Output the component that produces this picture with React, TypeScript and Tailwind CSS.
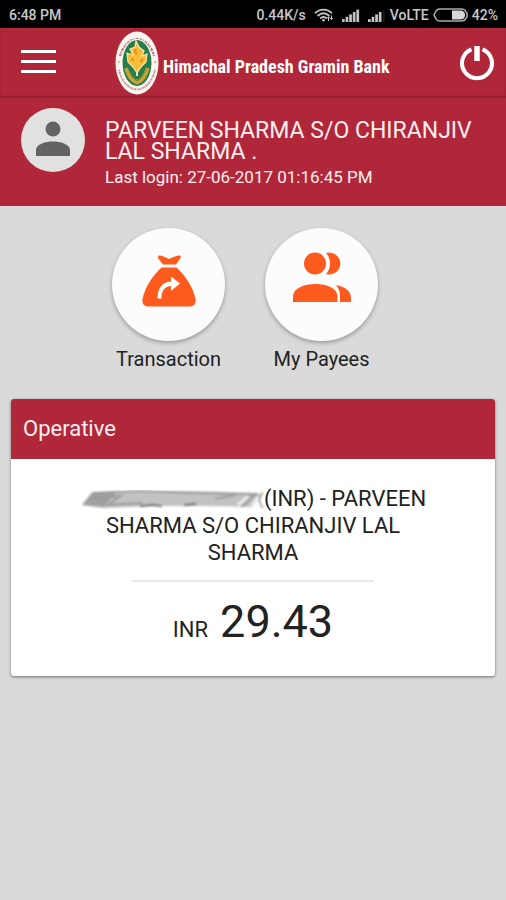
import { ReactNode } from 'react'

const account = {
  holder: 'PARVEEN SHARMA S/O CHIRANJIV LAL SHARMA',
  lastLogin: '27-06-2017 01:16:45 PM',
  currency: 'INR',
  balance: '29.43',
}

function WifiIcon() {
  return (
    <svg viewBox="0 0 20 14" className="h-[14px] w-5" fill="none" stroke="#c4c4c4" strokeWidth="1.8">
      <path d="M1 5.2C6 0.4 13 0.4 18 5.2" />
      <path d="M3.6 8C7.3 4.6 11.7 4.6 15.4 8" />
      <path d="M6.2 10.5c2-1.8 4.6-1.8 6.6 0" />
      <circle cx="9.5" cy="12.3" r="1.3" fill="#c4c4c4" stroke="none" />
      <path d="M14.5 13V9M13 10.5l1.5-1.8L16 10.5M17.5 7.5v4M16.3 10l1.2 1.6 1.2-1.6" strokeWidth="1" />
    </svg>
  )
}

function SignalIcon({ bars }: { bars: number }) {
  return (
    <svg viewBox="0 0 18 13" className="h-[13px] w-[18px]" fill="#c4c4c4">
      {[0, 1, 2, 3, 4].slice(0, bars).map(i => (
        <rect key={i} x={i * 3.6} y={10.2 - i * 2.4} width="2.7" height={2.8 + i * 2.4} />
      ))}
      {bars < 5 && <rect x="15.4" y="1" width="1" height="12" fill="#2c2c2c" />}
    </svg>
  )
}

function BatteryIcon() {
  return (
    <svg viewBox="0 0 35 14" className="h-[14px] w-[35px]">
      <path d="M1 7L3 3Q4 1 7 1H28Q32 1 33 4L34 5V9L33 10Q32 13 28 13H7Q4 13 3 11Z" fill="#000" stroke="#aaa" strokeWidth="1.6" />
      <path d="M19 2.5H28Q32 3 32 7Q32 11 28 11.5H19Z" fill="#d8d8d8" />
    </svg>
  )
}

function BankLogo() {
  return (
    <svg viewBox="0 0 44 64" className="h-16 w-11 shrink-0">
      <ellipse cx="22" cy="32" rx="21.5" ry="31.5" fill="#fbf4ee" />
      <path d="M5 25A18.5 28 0 0 1 39 25" fill="none" stroke="#b98084" strokeWidth="2.2" strokeDasharray="2.2 0.8 1.2 1.2 3 1" />
      <path d="M4 39A19 28.5 0 0 0 40 39" fill="none" stroke="#b98084" strokeWidth="1.8" strokeDasharray="1 0.8 1.5 0.7" />
      <circle cx="3.8" cy="31" r="0.9" fill="#e2a13b" />
      <circle cx="40.2" cy="31" r="0.9" fill="#e2a13b" />
      <ellipse cx="22" cy="32" rx="15.5" ry="24" fill="#fff" />
      <ellipse cx="22" cy="32" rx="14.5" ry="23" fill="#287b4a" />
      <path d="M11 37C13 45 17 50 22 52C27 50 31 45 33 37" fill="none" stroke="#c9a233" strokeWidth="3.4" />
      <path d="M13 37C15 43 18 46 22 49C26 46 29 43 31 37" fill="none" stroke="#7f9138" strokeWidth="1" />
      <path d="M22 36V45" stroke="#f3e3a0" strokeWidth="2" />
      <path
        d="M21 10L24 16L29 20L27 25L32 23L31 31L26 36L22 42L18 36L13 31L12 22L18 24L15 18L20 16Z"
        fill="#f6bd36"
        stroke="#f8e5b0"
        strokeWidth="1.2"
      />
      <path d="M21 18L20 21L22 23M16 28L19 29M28 28L26 30L27 31" fill="none" stroke="#e98a20" strokeWidth="2" />
    </svg>
  )
}

function PowerIcon() {
  return (
    <svg viewBox="0 0 36 36" className="h-9 w-9" fill="none" stroke="#fff">
      <path d="M12.5 4.3A15 15 0 1 0 23.5 4.3" strokeWidth="4" />
      <path d="M18 1V16" strokeWidth="5.5" />
    </svg>
  )
}

function PersonIcon() {
  return (
    <svg viewBox="0 0 34 35" className="h-[35px] w-[34px]" fill="#636363">
      <circle cx="17" cy="8" r="7.5" />
      <path d="M0 35V29C0 23 10 20.5 17 20.5S34 23 34 29V35Z" />
    </svg>
  )
}

function MoneyBagIcon() {
  return (
    <svg viewBox="0 0 54 52" className="h-[52px] w-[54px]" fill="#fd5a1e">
      <path d="M17 0.5C21 0 24 3 27 4C30 3 34 0 38 0.5Q39.5 1 38.5 3L34 9.5H21L16 3Q15.5 1 17 0.5Z" />
      <path d="M19.5 12.5H34.5C41 18 51 31 53.5 44Q54.5 51.5 48 51.5H5.5Q-0.5 51 0.5 44C3 31 13 18 19.5 12.5Z" />
      <path d="M15.5 43.5C15.5 34 19.5 27 29 26.5V21.5L38 28.5L29 36V31C23 31.5 19.5 35 19.5 43.5Z" fill="#fcfcfc" />
    </svg>
  )
}

function PayeesIcon() {
  return (
    <svg viewBox="0 0 58 50" className="mb-2 h-[50px] w-[58px]" fill="#fd5a1e">
      <circle cx="22" cy="11.5" r="11" />
      <path d="M33 1A11 11 0 1 1 33 22A15.5 15.5 0 0 0 33 1Z" />
      <path d="M0 50V45C0 36 11 32 22.5 32S44.5 36 44.5 45V50Z" />
      <path d="M43 33C52 34.5 58 39 58 46V50H47V45C47 40 46 36.5 43 33Z" />
    </svg>
  )
}

function Shortcut({ label, children }: { label: string; children: ReactNode }) {
  return (
    <button type="button" className="flex w-[113px] flex-col items-center gap-1">
      <span className="flex h-[113px] w-[113px] items-center justify-center rounded-full bg-[#fcfcfc] pb-2 shadow-[0_2px_4px_rgba(0,0,0,0.3)]">
        {children}
      </span>
      <span className="text-xl leading-7 whitespace-nowrap text-[#222]">{label}</span>
    </button>
  )
}

// Scribble that hides the account number
function MaskedNumber() {
  return (
    <svg viewBox="0 0 184 20" className="inline-block h-5 w-[184px]" role="img" aria-label="Hidden account number">
      <defs>
        <filter id="smudge" x="-5%" y="-20%" width="110%" height="140%">
          <feGaussianBlur stdDeviation="0.9" />
        </filter>
      </defs>
      <g filter="url(#smudge)" fill="none">
        <path d="M2 15L12 2L50 1L110 1L176 3L182 5L172 17L130 16L80 16L22 18Z" fill="#c2c2c2" />
        <path d="M2 15L12 3L36 3L24 17Z" fill="#a0a0a0" />
        <path d="M13 3L60 1L110 3L170 4" stroke="#8c8c8c" strokeWidth="1.5" />
        <path d="M8 9L40 6L28 15L62 13" stroke="#999" strokeWidth="2" />
        <path d="M60 16L72 15L82 16M104 15L116 14" stroke="#444" strokeWidth="1.5" />
        <path d="M135 9L155 5M166 5L176 4L162 17" stroke="#999" strokeWidth="2" />
        <path d="M158 15L168 6M172 16L178 7" stroke="#eee" strokeWidth="3" />
        <path d="M183 2Q176 10 183 18" stroke="#aaa" strokeWidth="2" />
      </g>
    </svg>
  )
}

export default function App() {
  return (
    <div className="min-h-screen bg-[#dadada] font-[Roboto,sans-serif]">
      <div className="flex h-7 items-center justify-between bg-black pt-0.5 pr-2 pl-[9px] text-sm font-medium text-[#c8c8c8]">
        <span>6:48 PM</span>
        <div className="flex items-center">
          <span className="mr-2">0.44K/s</span>
          <WifiIcon />
          <span className="ml-2"><SignalIcon bars={5} /></span>
          <span className="mr-1 ml-2"><SignalIcon bars={4} /></span>
          <span className="mr-1">VoLTE</span>
          <BatteryIcon />
          <span className="ml-1">42%</span>
        </div>
      </div>

      <header className="flex h-[70px] items-center bg-[#b1273a] pr-[11px] pl-[21px] shadow-[inset_0_-2px_2px_rgba(0,0,0,0.18)]">
        <button type="button" aria-label="Menu" className="flex w-[35px] shrink-0 flex-col gap-[7px] pb-1">
          <span className="h-[3px] bg-white" />
          <span className="h-[3px] bg-white" />
          <span className="h-[3px] bg-white" />
        </button>
        <div className="ml-[59px] flex flex-1 items-center">
          <BankLogo />
          <h1 className="ml-1 pt-2 font-['Roboto_Condensed',Roboto,sans-serif] text-lg leading-7 font-bold whitespace-nowrap text-white">
            Himachal Pradesh Gramin Bank
          </h1>
        </div>
        <button type="button" aria-label="Log out" className="shrink-0">
          <PowerIcon />
        </button>
      </header>

      <section className="flex h-[108px] items-start bg-[#b1273a] px-[21px] pt-[10px]">
        <div className="flex h-16 w-16 shrink-0 items-center justify-center rounded-full bg-[#e1e1e1] pb-1">
          <PersonIcon />
        </div>
        <div className="ml-5 pt-3 text-[#fdeff0]">
          <p className="text-[23px] leading-[21px]">{`${account.holder} .`}</p>
          <p className="mt-1 text-[17px] leading-[22px]">Last login: {account.lastLogin}</p>
        </div>
      </section>

      <main className="px-[11px] pt-[22px] pb-6">
        <nav className="flex justify-center gap-10 pr-4">
          <Shortcut label="Transaction">
            <MoneyBagIcon />
          </Shortcut>
          <Shortcut label="My Payees">
            <PayeesIcon />
          </Shortcut>
        </nav>

        <section className="mt-[26px] overflow-hidden rounded-[3px] bg-white shadow-[0_1px_3px_rgba(0,0,0,0.5)]">
          <h2 className="bg-[#b1273a] px-3 text-[22px] leading-[60px] text-[#fdeff0]">Operative</h2>
          <div className="px-[68px] pt-[26px] pb-[18px] text-center text-[#222]">
            <p className="text-[22px] leading-[27px]">
              <span className="whitespace-nowrap">
                <MaskedNumber />({account.currency}) - PARVEEN
              </span>{' '}
              SHARMA S/O CHIRANJIV LAL SHARMA
            </p>
            <hr className="mx-[53px] mt-[14px] border-t-2 border-[#e8e8e8]" />
            <p className="mt-3 text-[45px] leading-[56px]">
              <span className="mr-3 text-[22px]">{account.currency}</span>
              {account.balance}
            </p>
          </div>
        </section>
      </main>
    </div>
  )
}
